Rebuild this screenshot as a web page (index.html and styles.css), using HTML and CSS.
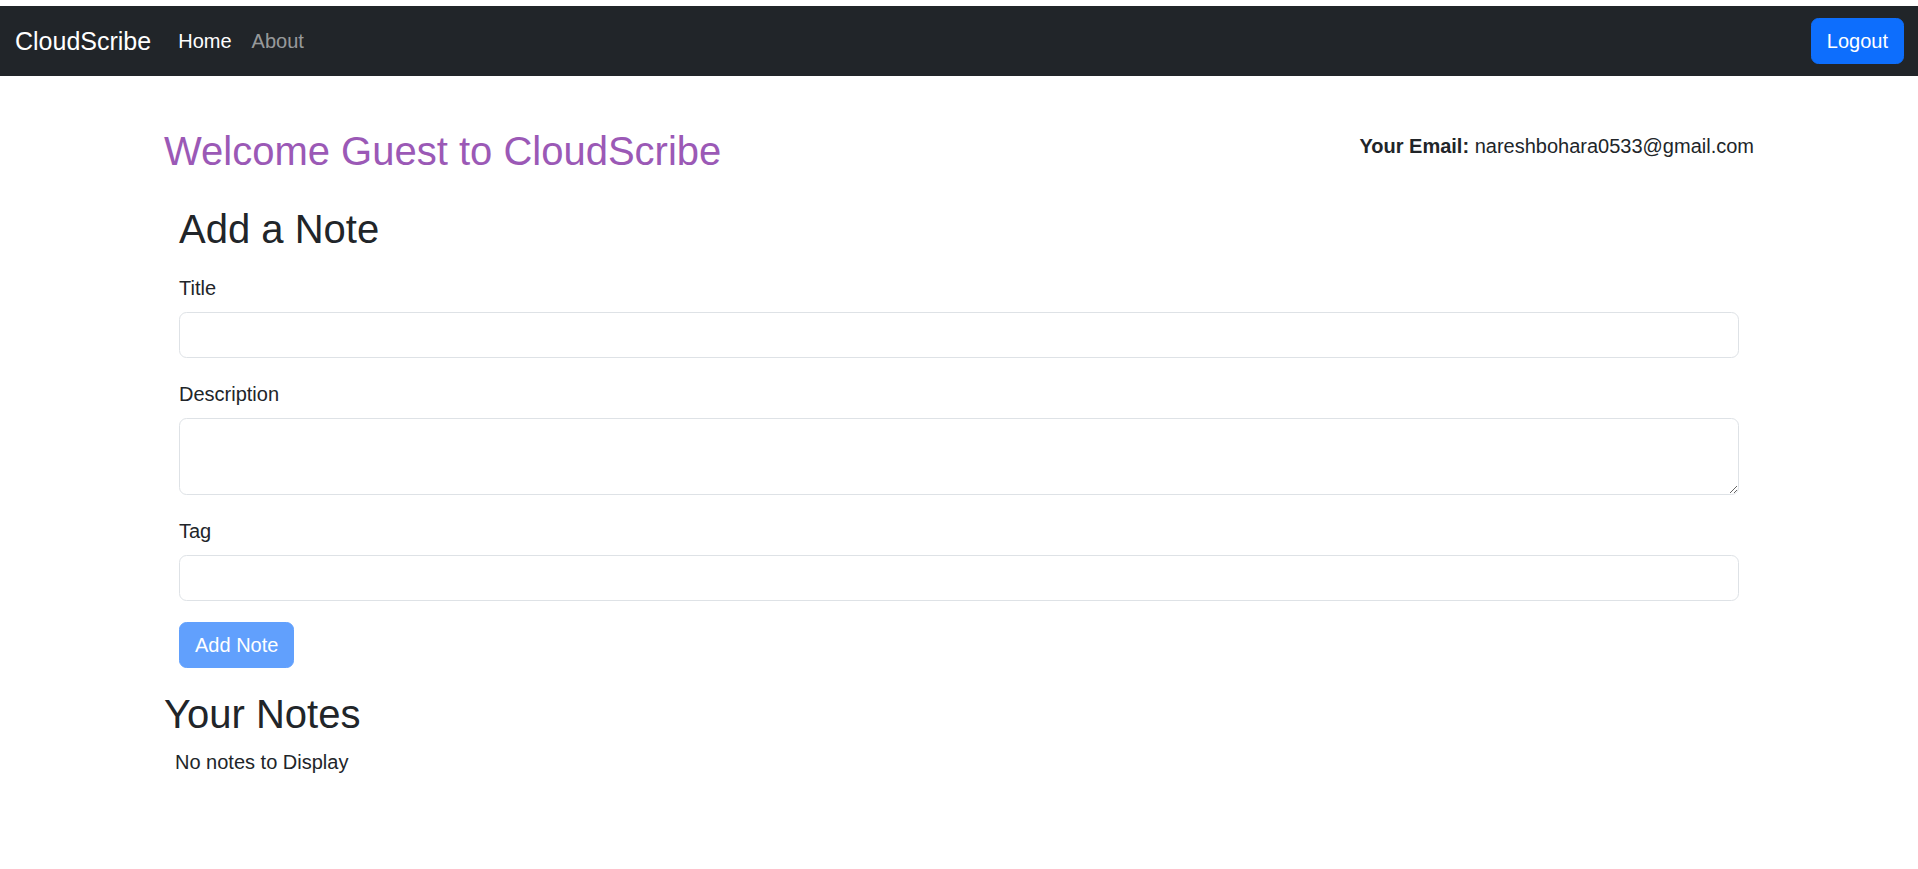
FILE: index.html
```html
<!DOCTYPE html>
<html lang="en">
<head>
    <meta charset="UTF-8">
    <title>CloudScribe</title>
    <link rel="stylesheet" href="styles.css">
</head>
<body>
    <nav class="navbar">
        <div class="nav-left">
            <a class="brand" href="#">CloudScribe</a>
            <a class="nav-link active" href="#">Home</a>
            <a class="nav-link" href="#">About</a>
        </div>
        <button class="btn btn-primary">Logout</button>
    </nav>

    <div class="container">
        <div class="welcome-row">
            <h2 class="welcome">Welcome Guest to CloudScribe</h2>
            <p class="email"><strong>Your Email:</strong> nareshbohara0533@gmail.com</p>
        </div>

        <!-- add note form -->
        <div class="add-note">
            <h2>Add a Note</h2>
            <form>
                <div class="field">
                    <label for="title">Title</label>
                    <input type="text" id="title" class="form-control">
                </div>
                <div class="field">
                    <label for="description">Description</label>
                    <textarea id="description" class="form-control" rows="2"></textarea>
                </div>
                <div class="field">
                    <label for="tag">Tag</label>
                    <input type="text" id="tag" class="form-control">
                </div>
                <button type="submit" class="btn btn-primary" disabled>Add Note</button>
            </form>
        </div>

        <h2 class="notes-title">Your Notes</h2>
        <div class="notes">No notes to Display</div>
    </div>
</body>
</html>
```

FILE: styles.css
```css
body {
    font-family: 'Liberation Sans', Arial, sans-serif;
    font-size: 20px;
    line-height: 30px;
    color: #212529;
    margin: 0;
    padding: 0;
    background-color: #fff;
}
a {
    text-decoration: none;
}
h2 {
    font-size: 40px;
    line-height: 48px;
    font-weight: 500;
    margin: 0;
}
.navbar {
    margin-top: 6px;
    height: 70px;
    background-color: #212529;
    display: flex;
    align-items: center;
    justify-content: space-between;
    padding: 0 14px 0 15px;
}
.nav-left {
    display: flex;
    align-items: center;
}
.brand {
    color: #fff;
    font-size: 25px;
    margin-right: 17px;
}
.nav-link {
    color: rgba(255, 255, 255, 0.55);
    padding: 0 10px;
}
.nav-link.active {
    color: #fff;
}
.btn {
    font-family: inherit;
    font-size: 20px;
    line-height: 30px;
    padding: 7px 15px;
    border: 1px solid transparent;
    border-radius: 7.5px;
    cursor: pointer;
}
.btn-primary {
    color: #fff;
    background-color: #0d6efd;
    border-color: #0d6efd;
}
.btn-primary:disabled {
    opacity: 0.65;
    cursor: default;
}
.container {
    width: 1590px;
    margin: 0 auto;
    padding-top: 51px;
}
.welcome-row {
    display: flex;
    justify-content: space-between;
    align-items: flex-start;
    margin-bottom: 30px;
}
.welcome {
    color: #9b59b6;
}
.email {
    margin: 4px 0 0;
}
.add-note {
    padding: 0 15px;
}
.add-note h2 {
    margin-bottom: 20px;
}
.field {
    margin-bottom: 21px;
}
.field label {
    display: block;
    margin-bottom: 9px;
}
.form-control {
    display: block;
    box-sizing: border-box;
    width: 100%;
    height: 46px;
    padding: 7px 15px;
    font-family: inherit;
    font-size: 20px;
    line-height: 30px;
    color: #212529;
    border: 1px solid #dee2e6;
    border-radius: 7.5px;
    background-color: #fff;
}
textarea.form-control {
    height: 77px;
    resize: vertical;
}
.notes-title {
    margin-top: 22px;
}
.notes {
    margin-top: 9px;
    padding-left: 11px;
}
```
